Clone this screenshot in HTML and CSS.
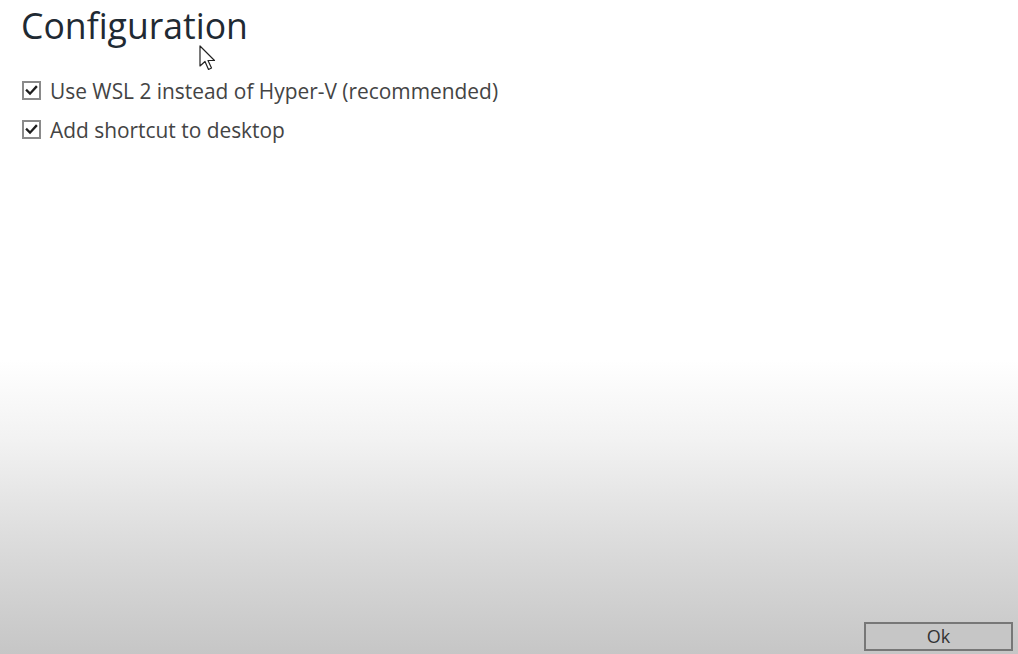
FILE: index.html
```html
<!DOCTYPE html>
<html>
<head>
<meta charset="utf-8">
<link rel="stylesheet" href="styles.css">
</head>
<body>
<div class="page">
  <h1 class="title">Configuration</h1>
  <div class="options">
    <label class="option">
      <span class="box"><svg viewBox="0 0 18 18"><path d="M3.5 9 L7.2 12.8 L14.5 4.8" fill="none" stroke="#1e1e1e" stroke-width="2.8" stroke-linecap="square"/></svg></span>
      <span class="label">Use WSL 2 instead of Hyper-V (recommended)</span>
    </label>
    <label class="option">
      <span class="box"><svg viewBox="0 0 18 18"><path d="M3.5 9 L7.2 12.8 L14.5 4.8" fill="none" stroke="#1e1e1e" stroke-width="2.8" stroke-linecap="square"/></svg></span>
      <span class="label">Add shortcut to desktop</span>
    </label>
  </div>
  <div class="spacer"></div>
  <div class="footer">
    <button class="ok">Ok</button>
  </div>
  <svg class="cursor" width="20" height="28" viewBox="0 0 20 28"><path d="M1 1 L1 21 L6 16.5 L9.5 24.5 L12.5 23 L9 15.5 L15.5 15.5 Z" fill="#fff" stroke="#222" stroke-width="1.2" stroke-linejoin="round"/></svg>
</div>
</body>
</html>
```
FILE: styles.css
```css
html, body {
  margin: 0;
  padding: 0;
  height: 100%;
}
body {
  font-family: "Open Sans", "Noto Sans", sans-serif;
  color: #333;
  background: linear-gradient(to bottom, #ffffff 0px, #ffffff 360px, #f2f2f2 440px, #d8d8d8 560px, #c6c6c6 654px);
}
.page {
  position: relative;
  height: 654px;
  display: flex;
  flex-direction: column;
  padding: 0 0 0 21px;
  box-sizing: border-box;
}
.title {
  margin: 0;
  padding-top: 2px;
  font-weight: 400;
  font-size: 35.6px;
  line-height: 46px;
  color: #1f2a33;
}
.options {
  margin-top: 27px;
  display: flex;
  flex-direction: column;
  gap: 8px;
}
.option {
  display: flex;
  align-items: center;
  gap: 9px;
  height: 31px;
}
.box {
  width: 19px;
  height: 19px;
  border: 2px solid #8a8a8a;
  background: #fff;
  display: flex;
  align-items: center;
  justify-content: center;
  box-sizing: border-box;
  margin-left: 1px;
}
.box svg {
  width: 17px;
  height: 17px;
}
.label {
  font-size: 20.9px;
  color: #444;
}
.spacer {
  flex: 1;
}
.footer {
  display: flex;
  justify-content: flex-end;
  padding: 0 5px 3px 0;
}
.ok {
  width: 149px;
  height: 29px;
  border: 2px solid #777;
  background: #c6c6c6;
  font-family: "Open Sans", "Noto Sans", sans-serif;
  font-size: 18px;
  color: #333;
  padding: 0;
  line-height: 25px;
}
.cursor {
  position: absolute;
  left: 199px;
  top: 45px;
}
```
